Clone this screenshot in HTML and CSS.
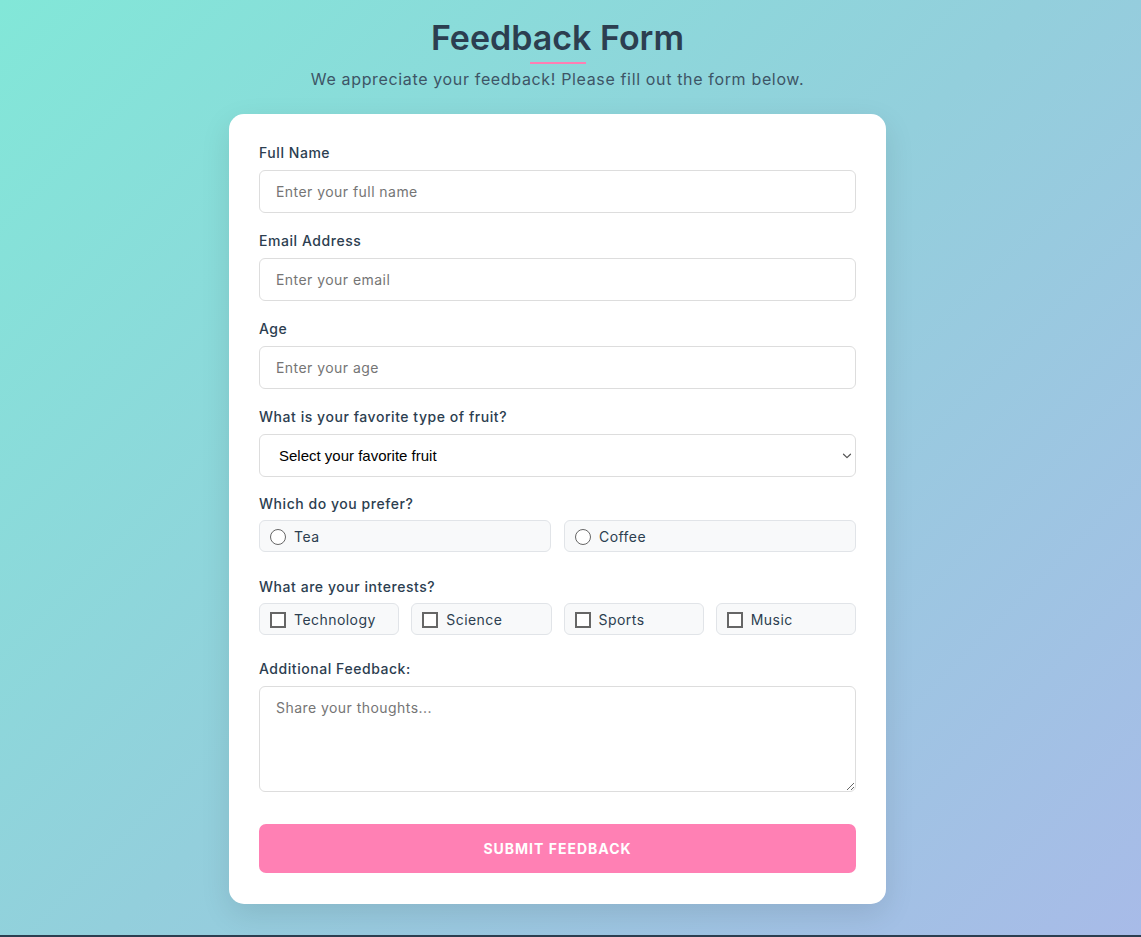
FILE: index.html
```html
<!DOCTYPE html>
<html lang="en">
<head>
<meta charset="utf-8">
<title>Feedback Form</title>
<link rel="stylesheet" href="styles.css">
</head>
<body>
<div class="page">
  <header class="header">
    <h1 class="title">Feedback Form</h1>
    <div class="title-bar"></div>
    <p class="subtitle">We appreciate your feedback! Please fill out the form below.</p>
  </header>
  <form class="card">
    <div class="group">
      <label class="label" for="name">Full Name</label>
      <input class="field" id="name" type="text" placeholder="Enter your full name">
    </div>
    <div class="group">
      <label class="label" for="email">Email Address</label>
      <input class="field" id="email" type="email" placeholder="Enter your email">
    </div>
    <div class="group">
      <label class="label" for="age">Age</label>
      <input class="field" id="age" type="text" placeholder="Enter your age">
    </div>
    <div class="group group-select">
      <label class="label" for="fruit">What is your favorite type of fruit?</label>
      <div class="select-wrap">
        <select class="field select" id="fruit">
          <option>Select your favorite fruit</option>
        </select>
        <svg class="chev" width="10" height="6" viewBox="0 0 10 6" aria-hidden="true">
          <path d="M1.5 1.2 L5 4.6 L8.5 1.2" fill="none" stroke="#555" stroke-width="1.2" stroke-linecap="round" stroke-linejoin="round"/>
        </svg>
      </div>
    </div>
    <div class="group group-opts">
      <div class="label">Which do you prefer?</div>
      <div class="opts opts-2">
        <label class="opt"><span class="radio"></span>Tea</label>
        <label class="opt"><span class="radio"></span>Coffee</label>
      </div>
    </div>
    <div class="group group-opts group-interests">
      <div class="label">What are your interests?</div>
      <div class="opts opts-4">
        <label class="opt"><span class="check"></span>Technology</label>
        <label class="opt"><span class="check"></span>Science</label>
        <label class="opt"><span class="check"></span>Sports</label>
        <label class="opt"><span class="check"></span>Music</label>
      </div>
    </div>
    <div class="group group-last">
      <label class="label" for="fb">Additional Feedback:</label>
      <textarea class="field area" id="fb" placeholder="Share your thoughts..."></textarea>
    </div>
    <button class="submit" type="button">SUBMIT FEEDBACK</button>
  </form>
</div>
</body>
</html>
```
FILE: styles.css
```css
html {
  background: #2c3e50;
}
body {
  margin: 0;
  height: 935px;
  background: linear-gradient(135deg, #82e7d8 0%, #93cfdc 50%, #a8bbe8 100%);
  font-family: "Inter", "Open Sans", sans-serif;
  color: #2c3e50;
}
.page {
  display: flex;
  flex-direction: column;
  align-items: center;
  padding: 16px 26px 0 0;
}
.header {
  display: flex;
  flex-direction: column;
  align-items: center;
}
.title {
  margin: 0;
  font-size: 34px;
  font-weight: 600;
  line-height: 44px;
  color: #2c3e50;
}
.title-bar {
  width: 56px;
  height: 2px;
  background: #ff7eb3;
  margin-top: 2px;
}
.subtitle {
  margin: 3px 0 0;
  font-size: 16px;
  line-height: 24px;
  letter-spacing: 0.65px;
  color: #3d5566;
}
.card {
  box-sizing: border-box;
  width: 657px;
  margin-top: 23px;
  padding: 28px 30px 31px;
  background: #fff;
  border-radius: 15px;
  box-shadow: 0 10px 30px rgba(0, 0, 0, 0.1);
  display: flex;
  flex-direction: column;
}
.group {
  display: flex;
  flex-direction: column;
  margin-bottom: 17px;
}
.group-select {
  margin-bottom: 16px;
}
.group-opts {
  margin-bottom: 24px;
}
.group-interests {
  margin-bottom: 23px;
}
.group-last {
  margin-bottom: 32px;
}
.label {
  font-size: 14px;
  font-weight: 500;
  line-height: 21px;
  letter-spacing: 0.55px;
  margin-bottom: 7px;
  color: #2c3e50;
}
.group-opts .label {
  margin-bottom: 6px;
}
.field {
  box-sizing: border-box;
  width: 100%;
  height: 43px;
  padding: 0 16px;
  border: 1px solid #dddddd;
  border-radius: 6px;
  font-family: inherit;
  font-size: 14px;
  letter-spacing: 0.45px;
  color: #2c3e50;
  background: #fff;
  outline: none;
}
.field::placeholder {
  color: #757575;
}
.select-wrap {
  position: relative;
}
.select {
  appearance: none;
  -webkit-appearance: none;
  padding: 0 19px;
  font-family: "Liberation Sans", Arial, sans-serif;
  font-size: 15px;
  letter-spacing: 0;
  color: #000;
}
.chev {
  position: absolute;
  right: 4px;
  top: 19px;
  pointer-events: none;
}
.area {
  height: 106px;
  padding: 12px 16px;
  resize: vertical;
  display: block;
}
.opts {
  display: grid;
  gap: 13px;
}
.opts-2 {
  grid-template-columns: 1fr 1fr;
}
.opts-4 {
  grid-template-columns: repeat(4, 1fr);
  gap: 12px;
}
.opt {
  box-sizing: border-box;
  height: 32px;
  display: flex;
  align-items: center;
  padding-left: 10px;
  background: #f8f9fa;
  border: 1px solid #e1e4e8;
  border-radius: 6px;
  font-size: 14px;
  letter-spacing: 0.45px;
  color: #2c3e50;
}
.radio {
  box-sizing: border-box;
  flex: none;
  width: 16px;
  height: 16px;
  border: 1.5px solid #666;
  border-radius: 50%;
  background: #fff;
  margin-right: 8px;
  margin-top: 2px;
}
.check {
  box-sizing: border-box;
  flex: none;
  width: 16px;
  height: 16px;
  border: 2px solid #666;
  background: #fff;
  margin-right: 8px;
  margin-top: 1px;
}
.submit {
  height: 49px;
  border: none;
  border-radius: 7px;
  background: #ff80b4;
  color: #fff;
  font-family: inherit;
  font-size: 14px;
  font-weight: 700;
  letter-spacing: 1px;
}
```
